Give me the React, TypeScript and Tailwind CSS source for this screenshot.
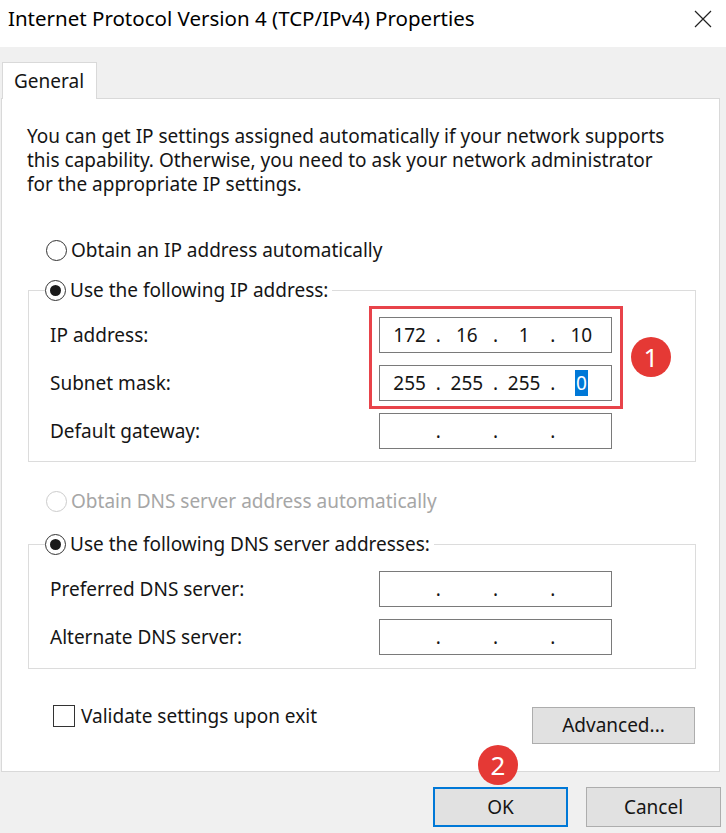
import React from 'react';

const cn = (...c: (string | false | undefined)[]) => c.filter(Boolean).join(' ');

const Radio = ({ checked, disabled }: { checked?: boolean; disabled?: boolean }) => (
  <span
    className={cn(
      'flex h-[21px] w-[21px] shrink-0 items-center justify-center rounded-full border bg-white',
      disabled ? 'border-[#cccccc]' : 'border-[#333333]'
    )}
  >
    {checked && <span className="h-[11px] w-[11px] rounded-full bg-[#1a1a1a]" />}
  </span>
);

const IpField = ({ parts, selectLast }: { parts: string[]; selectLast?: boolean }) => (
  <div className="flex h-[36px] w-[233px] items-center border border-[#7a7a7a] bg-white px-[6px]">
    {parts.map((p, i) => (
      <React.Fragment key={i}>
        <span className="flex-1 text-center">
          {selectLast && i === 3 ? <span className="bg-[#0078d7] px-[1px] text-white">{p}</span> : p}
        </span>
        {i < 3 && <span className="w-[10px] text-center">.</span>}
      </React.Fragment>
    ))}
  </div>
);

const Row = ({ label, children }: { label: string; children: React.ReactNode }) => (
  <div className="grid grid-cols-[329px_233px] items-center">
    <span>{label}</span>
    {children}
  </div>
);

const Badge = ({ n }: { n: string }) => (
  <span className="flex h-[40px] w-[40px] items-center justify-center rounded-full bg-[#e53935] text-[26px] text-white">
    {n}
  </span>
);

export default function App() {
  return (
    <div className="relative h-[833px] w-[726px] overflow-hidden bg-[#f0f0f0] font-['Noto_Sans',sans-serif] text-[19px] text-[#151515]">
      {/* Title bar */}
      <div className="flex h-[47px] items-start justify-between bg-white pl-[8px] pr-[14px] pt-[4px]">
        <span className="text-[20.5px] leading-[28px] text-black">Internet Protocol Version 4 (TCP/IPv4) Properties</span>
        <svg width="18" height="18" viewBox="0 0 18 18" className="mt-[6px]">
          <path d="M1 1 L17 17 M17 1 L1 17" stroke="#222" strokeWidth="1.2" />
        </svg>
      </div>

      {/* Tabs */}
      <div className="pl-[2px] pt-[15px]">
        <div className="relative z-10 -mb-px flex h-[37px] w-[95px] items-center border border-b-0 border-[#d9d9d9] bg-white pl-[11px]">
          General
        </div>
      </div>

      {/* Panel */}
      <div className="ml-[1px] flex h-[674px] w-[719px] flex-col border border-[#d9d9d9] bg-white pl-[25px] pt-[25px]">
        <p className="w-[645px] leading-[24px]">
          You can get IP settings assigned automatically if your network supports this capability. Otherwise, you need
          to ask your network administrator for the appropriate IP settings.
        </p>

        <div className="mt-[39px] flex h-[30px] items-center gap-[4px] pl-[19px]">
          <Radio />
          <span>Obtain an IP address automatically</span>
        </div>

        <fieldset className="relative ml-[1px] mt-[10px] w-[668px] border border-[#dcdcdc] pb-[12px] pl-[16px]">
          <legend className="flex h-[30px] items-center gap-[4px] pr-[4px]">
            <Radio checked />
            <span>Use the following IP address:</span>
          </legend>
          <div className="flex flex-col gap-[12px] pl-[5px] pt-[12px]">
            <Row label="IP address:">
              <IpField parts={['172', '16', '1', '10']} />
            </Row>
            <Row label="Subnet mask:">
              <IpField parts={['255', '255', '255', '0']} selectLast />
            </Row>
            <Row label="Default gateway:">
              <IpField parts={['', '', '', '']} />
            </Row>
          </div>
          {/* annotation */}
          <div className="absolute left-[340px] top-[1px] h-[103px] w-[254px] border-[3px] border-[#e8434a]" />
          <div className="absolute left-[602px] top-[32px]">
            <Badge n="1" />
          </div>
        </fieldset>

        <div className="mt-[24px] flex h-[30px] items-center gap-[4px] pl-[19px] text-[#a6a6a6]">
          <Radio disabled />
          <span>Obtain DNS server address automatically</span>
        </div>

        <fieldset className="ml-[1px] mt-[13px] w-[668px] border border-[#dcdcdc] pb-[13px] pl-[16px]">
          <legend className="flex h-[30px] items-center gap-[4px] pr-[4px]">
            <Radio checked />
            <span>Use the following DNS server addresses:</span>
          </legend>
          <div className="flex flex-col gap-[12px] pl-[5px] pt-[12px]">
            <Row label="Preferred DNS server:">
              <IpField parts={['', '', '', '']} />
            </Row>
            <Row label="Alternate DNS server:">
              <IpField parts={['', '', '', '']} />
            </Row>
          </div>
        </fieldset>

        <div className="mt-[35px] flex w-[668px] items-start justify-between">
          <div className="flex h-[24px] items-center gap-[6px] pl-[26px]">
            <span className="h-[22px] w-[22px] border border-[#333333] bg-white" />
            <span>Validate settings upon exit</span>
          </div>
          <button className="mt-[3px] h-[37px] w-[163px] border border-[#adadad] bg-[#e1e1e1]">Advanced...</button>
        </div>
      </div>

      {/* Bottom buttons */}
      <div className="flex justify-end gap-[18px] pr-[5px] pt-[15px]">
        <button className="h-[40px] w-[135px] border-2 border-[#0078d7] bg-[#e1e1e1]">OK</button>
        <button className="h-[40px] w-[135px] border border-[#adadad] bg-[#e1e1e1]">Cancel</button>
      </div>

      <div className="absolute left-[478px] top-[745px]">
        <Badge n="2" />
      </div>
    </div>
  );
}
